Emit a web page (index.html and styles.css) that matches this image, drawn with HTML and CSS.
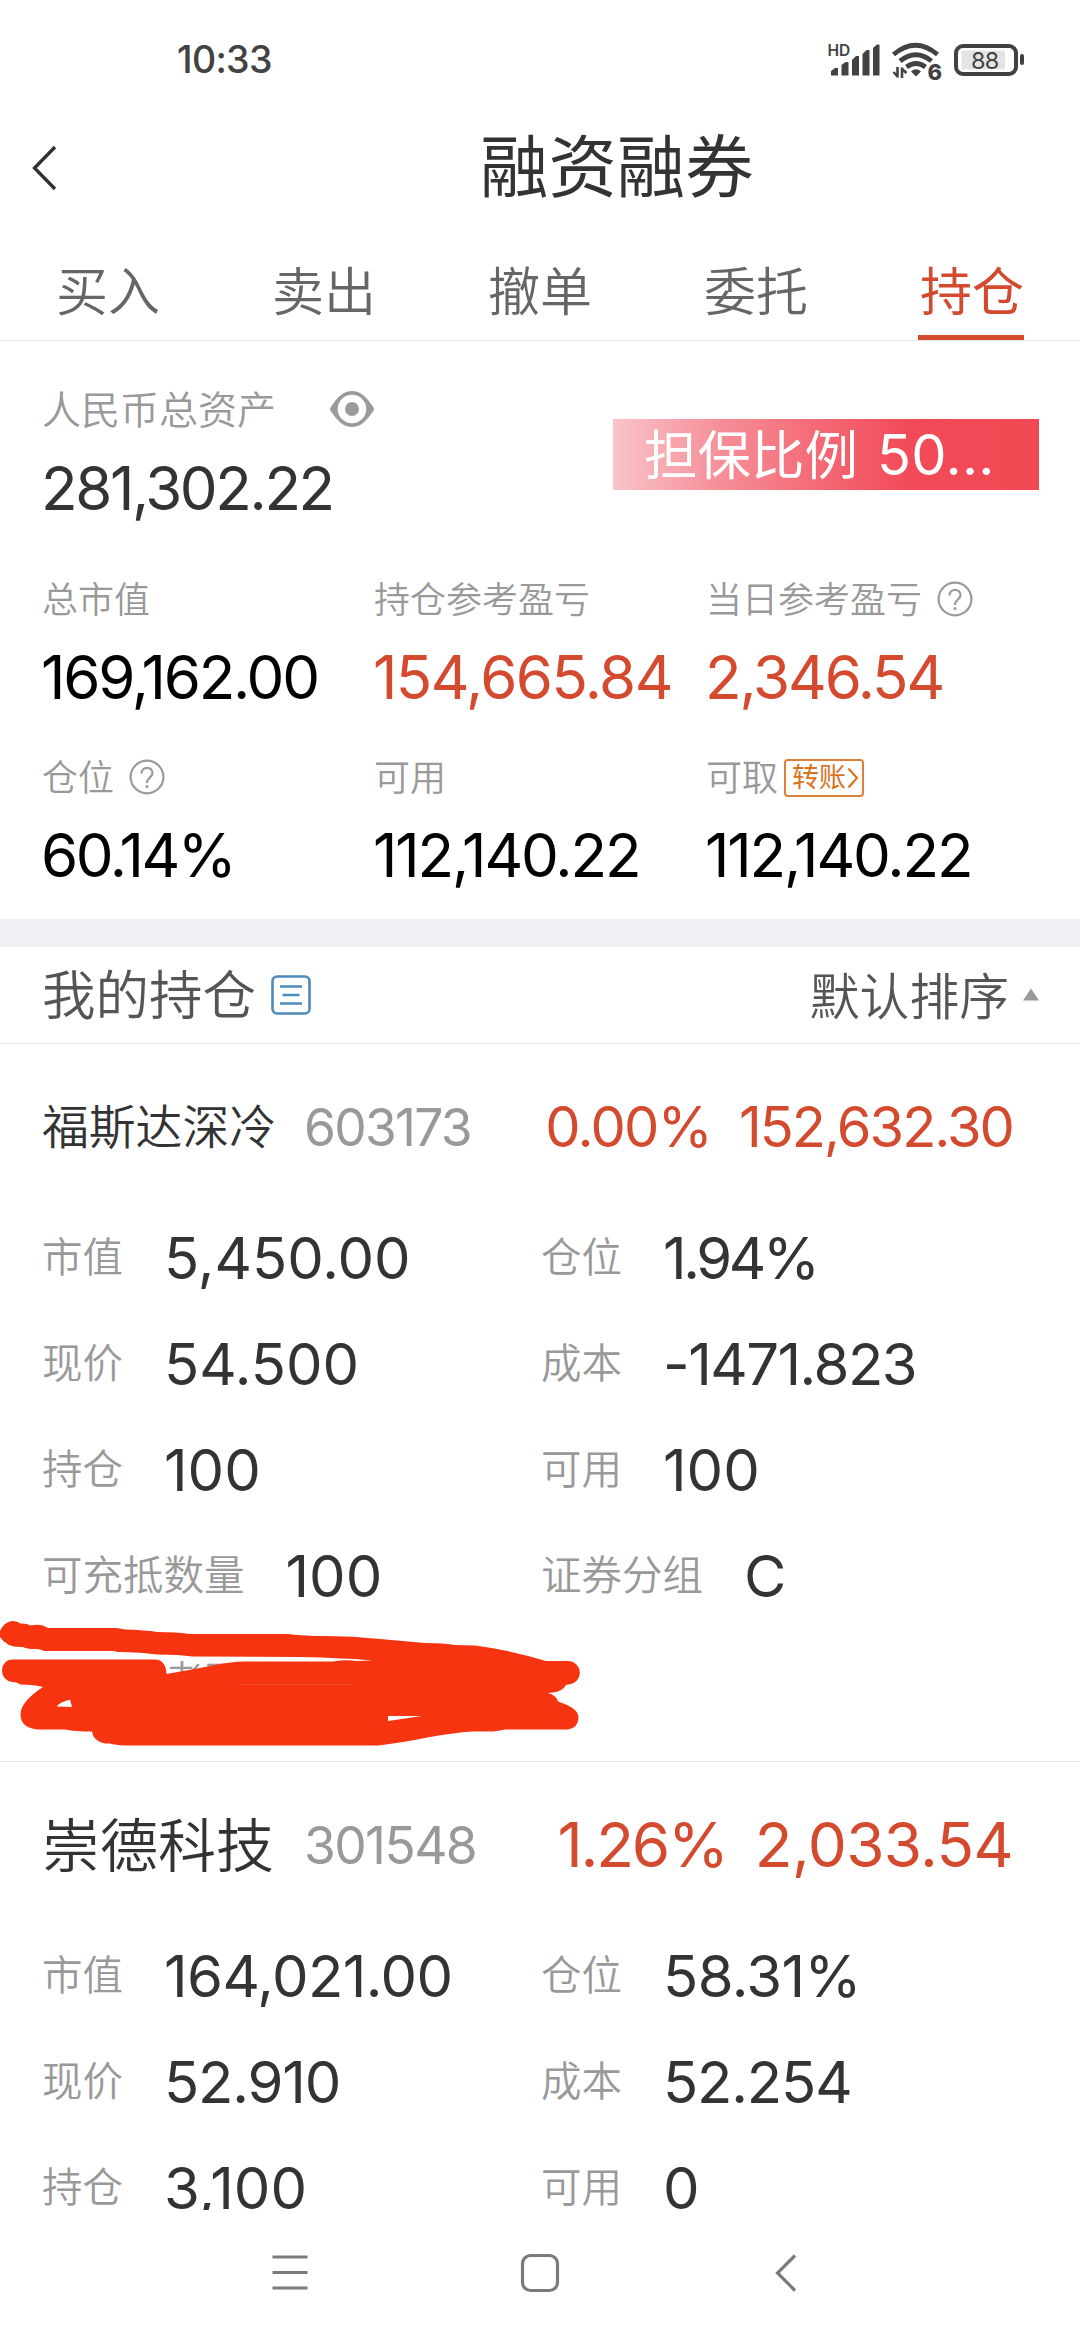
FILE: index.html
```html
<!DOCTYPE html>
<html lang="zh-CN">
<head>
<meta charset="utf-8">
<title>融资融券</title>
<link rel="stylesheet" href="styles.css">
</head>
<body>
<div class="screen">
  <header class="status">
    <span class="time num k1">10:33</span>
    <svg class="status-icons" width="200" height="48" viewBox="826 36 200 48">
      <text class="hd" x="827.5" y="55.5">HD</text>
      <g fill="#424242">
        <path d="M831 75.500V71l4-3h3v7.500zM841.500 75.500V65l4-3h3v13.500zM852 75.500V60l4-4h3v19.500zM862.500 75.500V54l4-4h3v25.500zM873 75.500V48l4-3.500h2.500v31z"/>
        <path d="M911 71.500q5-4.500 10 0l-5 5z"/>
        <path d="M1020 56q0-2 2-2t2 2v7q0 2-2 2t-2-2z"/>
      </g>
      <g fill="none" stroke="#424242" stroke-width="4.800">
        <path d="M893.500 54.500q22-18.500 44 0M900 61q16-12.500 31.500 0M906.500 67q9.500-7 19 0"/>
        <path stroke-width="2.600" d="M897.500 67v10.500M902 67.500V78M893.500 72l4 4.500M902 69l4.500 4"/>
        <rect x="956" y="46" width="60" height="28" rx="7" stroke-width="4"/>
      </g>
      <rect x="961.500" y="50.500" width="43.500" height="19" rx="1.500" fill="#e4e4e4"/>
      <text class="wifi-gen" x="927.5" y="79.500">6</text>
      <text class="level" x="971" y="68.500">88</text>
    </svg>
  </header>

  <div class="titlebar">
    <svg class="back" width="28" height="48" viewBox="0 0 28 48"><path d="M25 3 4.500 24 25 45" fill="none" stroke="#333" stroke-width="3.400"/></svg>
    <h1>融资融券</h1>
  </div>

  <nav class="tabs">
    <a>买入</a><a>卖出</a><a>撤单</a><a>委托</a><a class="active">持仓</a>
  </nav>

  <section class="summary">
    <div class="total">
      <div>
        <div class="total-label">人民币总资产
          <svg width="46" height="38" viewBox="0 0 46 38"><path d="M1 19Q1 17.500 4 14C10 5 16 1 23 1s13 4 19 13Q45 17.500 45 19T42 24C36 33 30 37 23 37S10 33 4 24Q1 20.500 1 19z" fill="#9a9a9a"/><circle cx="23" cy="19" r="14.300" fill="#fff"/><circle cx="23" cy="19" r="7" fill="#9a9a9a"/></svg>
        </div>
        <div class="amount num dark k4">281,302.22</div>
      </div>
      <div class="ratio"><span>担保比例</span><span class="num">50...</span></div>
    </div>
    <div class="metrics">
      <div><div class="label">总市值</div><div class="amount num k37">169,162.00</div></div>
      <div><div class="label">持仓参考盈亏</div><div class="amount num red k26">154,665.84</div></div>
      <div><div class="label">当日参考盈亏<svg class="help" width="36" height="36" viewBox="0 0 36 36"><circle cx="18" cy="18" r="16.400"/><path d="M12.500 14.500c0-7.500 11-7.500 11-.5 0 4.500-5.500 4.500-5.500 10"/><circle class="dot" cx="18" cy="27.500" r="1.500"/></svg></div><div class="amount num red k35">2,346.54</div></div>
      <div><div class="label">仓位<svg class="help" width="36" height="36" viewBox="0 0 36 36"><circle cx="18" cy="18" r="16.400"/><path d="M12.500 14.500c0-7.500 11-7.500 11-.5 0 4.500-5.500 4.500-5.500 10"/><circle class="dot" cx="18" cy="27.500" r="1.500"/></svg></div><div class="amount num k4">60.14%</div></div>
      <div><div class="label">可用</div><div class="amount num k35">112,140.22</div></div>
      <div><div class="label">可取<span class="transfer"><span>转账</span><svg width="12" height="22" viewBox="0 0 12 22"><path d="M1.500 1.500 10 11 1.500 20.500" fill="none" stroke="#d9731f" stroke-width="2.200"/></svg></span></div><div class="amount num k35">112,140.22</div></div>
    </div>
  </section>

  <div class="band"></div>

  <div class="list-head">
    <h2>我的持仓</h2>
    <svg width="40" height="40" viewBox="0 0 40 40" fill="none" stroke="#4c8bbb"><rect x="1.500" y="1.500" width="37" height="37" rx="4.500" stroke-width="2.600"/><path d="M9 11.500h22M11.500 20h17M9 28.500h22" stroke-width="2.600"/></svg>
    <span class="sort">默认排序</span>
    <svg class="tri" width="18" height="13" viewBox="0 0 18 13"><path d="M9 0.500 17 12.500H1z" fill="#999"/></svg>
  </div>

  <main class="holdings">
    <article class="holding">
      <div class="head">
        <span class="name small">福斯达深冷</span><span class="code num k34">603173</span>
        <span class="gain num"><span class="k3">0.00%</span><span class="k35">152,632.30</span></span>
      </div>
      <div class="rows">
        <div><span class="key">市值</span><span class="num">5,450.00</span></div>
        <div><span class="key">仓位</span><span class="num k6">1.94%</span></div>
        <div><span class="key">现价</span><span class="num">54.500</span></div>
        <div><span class="key">成本</span><span class="num k26">-1471.823</span></div>
        <div><span class="key">持仓</span><span class="num">100</span></div>
        <div><span class="key">可用</span><span class="num">100</span></div>
        <div><span class="key">可充抵数量</span><span class="num">100</span></div>
        <div><span class="key">证券分组</span><span class="num">C</span></div>
        <div><span class="key">当日参考盈亏</span></div>
      </div>
      <svg class="scribble" width="600" height="160" viewBox="0 0 600 160">
        <path fill="#f63410" fill-rule="evenodd" d="M0 31Q4 22 12 21Q18 21 20 23.500Q27 23 30 25.500Q41 23 48 28H117L125 29.500Q145 30 157 32Q178 32 190 34H288Q305 36 325 36Q353 36 380 39L425 43Q445 43 455 45L475 45.500Q510 50 546 61H568A11.500 11.500 0 0 1 568 84.500L566 85Q562 92 553 92.500L548 93Q556 95 558 101.500Q579 108 578.500 118Q578 128 568 129.500H505Q495 131.500 490 131.500H472Q455 132.500 430 137Q400 143 378 145.500H125Q115 145 110 143.500H105Q93 141 92 131.500Q75 131.500 65 129.500H38Q21 128 20.500 115Q20 102 43 87Q35 84.500 20 84.500Q18 82 12 82Q2 80 2 70Q3 60 12 59.500H155Q166 60 166.500 74Q190 70 210 66Q230 61.500 245 61.500H333Q345 59.500 357 61L373 60.500Q345 58 300 57L192 56.500Q180 54.500 157 54.500Q138 51.500 117 52L114 51H44Q40 48.500 35 49Q27 49 23 47Q7 48 0 37ZM56.500 106.500Q60 102 70 99.500L72 107ZM388 116H422L388 121Z"/>
        <path d="M241 84.500H352" stroke="#fa6a4e" stroke-width=".5"/>
      </svg>
    </article>

    <article class="holding">
      <div class="head">
        <span class="name">崇德科技</span><span class="code num k3">301548</span>
        <span class="gain large num"><span class="k35">1.26%</span><span class="k1">2,033.54</span></span>
      </div>
      <div class="rows">
        <div><span class="key">市值</span><span class="num k1">164,021.00</span></div>
        <div><span class="key">仓位</span><span class="num k1">58.31%</span></div>
        <div><span class="key">现价</span><span class="num k2">52.910</span></div>
        <div><span class="key">成本</span><span class="num k2">52.254</span></div>
        <div><span class="key">持仓</span><span class="num">3,100</span></div>
        <div><span class="key">可用</span><span class="num">0</span></div>
      </div>
    </article>
  </main>

  <footer class="sysnav">
    <svg width="40" height="40" viewBox="0 0 40 40"><path d="M2.500 4h35M2.500 19.500h35M2.500 35h35"/></svg>
    <svg width="40" height="40" viewBox="0 0 40 40"><rect x="2.500" y="2.500" width="35" height="35" rx="8"/></svg>
    <svg width="40" height="40" viewBox="0 0 40 40"><path d="M28 2.500 10.500 20 28 37.500"/></svg>
  </footer>
</div>
</body>
</html>
```
FILE: styles.css
```css
* { box-sizing: border-box; margin: 0; padding: 0; }
body { background: #fff; }
svg { display: block; flex: none; }
.screen {
  width: 1080px; height: 2340px; overflow: hidden;
  display: flex; flex-direction: column;
  background: #fff; color: #333;
  font-family: "Noto Sans CJK SC", sans-serif; font-weight: 350;
  white-space: nowrap;
}
.num { font-family: Inter, sans-serif; font-weight: 400; }

/* digit tracking */
.k1 { letter-spacing: -.01em; }
.k2 { letter-spacing: -.02em; }
.k26 { letter-spacing: -.026em; }
.k3 { letter-spacing: -.031em; }
.k34 { letter-spacing: -.034em; }
.k35 { letter-spacing: -.035em; }
.k37 { letter-spacing: -.037em; }
.k4 { letter-spacing: -.04em; }
.k6 { letter-spacing: -.058em; }

.status {
  height: 118px; flex: none; padding: 2px 54px 0 177px;
  display: flex; align-items: center; justify-content: space-between;
}
.time { font-size: 37.5px; line-height: 48px; font-weight: 500; color: #424242; letter-spacing: -.018em; }
.status-icons text { font-family: Inter, sans-serif; fill: #424242; }
.status-icons .hd { font-size: 15.5px; font-weight: 600; }
.status-icons .wifi-gen { font-size: 22px; font-weight: 800; }
.status-icons .level { font-size: 23.5px; font-weight: 400; letter-spacing: -.8px; }

.titlebar { height: 87px; flex: none; display: flex; align-items: center; padding-left: 30px; }
.back { margin-top: 13px; }
.titlebar h1 { margin: 2px 0 0 422px; font-size: 68.4px; line-height: 84px; font-weight: 400; }

.tabs { height: 136px; flex: none; display: flex; border-bottom: 1px solid #e6e6e6; }
.tabs a {
  flex: 1; position: relative; padding-top: 49px; text-align: center;
  font-size: 52px; line-height: 70px; color: #666;
}
.tabs .active { color: #d44a2f; font-weight: 400; }
.tabs .active::after {
  content: ""; position: absolute; left: 54px; right: 56px; bottom: 0; height: 5px;
  background: #d44a2f;
}

.summary { height: 578px; flex: none; padding: 46px 41px 0 42px; }
.total { height: 190px; display: flex; justify-content: space-between; }
.total-label {
  display: flex; align-items: center; gap: 53px; height: 40px;
  font-size: 39px; line-height: 60px; color: #999;
}
.total-label svg { margin-top: 4px; }
.amount { font-size: 60px; line-height: 60px; margin-top: 31px; color: #000; text-indent: -1px; }
.dark { color: #333; }
.red { color: #d44a2f; }
.ratio {
  width: 426px; height: 71px; margin-top: 32px; padding-left: 31px;
  display: flex; align-items: center; gap: 19px;
  font-size: 53.5px; line-height: 70px; font-weight: 400; color: #fff;
  background: linear-gradient(90deg, #fac3c9 0%, #f58f98 25%, #f46673 50%, #f24a58 70%, #f24854 100%);
}
.ratio span:first-child { margin-bottom: 6px; }
.ratio .num { font-size: 56px; letter-spacing: .005em; margin-top: 1px; }
.metrics { display: grid; grid-template-columns: repeat(3, 332px); grid-auto-rows: 178px; }
.metrics .amount { margin-top: 30px; }
.label { display: flex; align-items: center; height: 40px; font-size: 36px; line-height: 56px; color: #999; }
.help { margin: 3px 0 0 15px; fill: none; stroke: #9a9a9a; stroke-width: 2.2; }
.help .dot { fill: #9a9a9a; stroke: none; }
.transfer {
  width: 80px; height: 38px; margin: 5px 0 0 6px; padding-left: 6px;
  display: flex; align-items: center; gap: 1px;
  border: 2px solid #dd8136; border-radius: 4px; color: #d9731f;
  font-size: 27px; line-height: 40px; font-weight: 400;
}
.transfer span { margin-bottom: 3px; }

.band { height: 28px; flex: none; background: #efeff4; }

.list-head {
  height: 97px; flex: none; display: flex; align-items: center;
  padding: 0 40px 0 42px; border-bottom: 1px solid #e6e6e6; color: #555;
}
.list-head h2 { font-size: 53.5px; line-height: 80px; font-weight: 350; margin: 0 15px 7px 0; }
.sort { margin: 0 13px 5px auto; font-size: 49.8px; line-height: 76px; }
.tri { margin-bottom: 2px; }

.holdings { height: 1166px; flex: none; overflow: hidden; }
.holding { position: relative; height: 718px; border-bottom: 1px solid #e6e6e6; }
.head { height: 160px; padding: 5px 67px 0 42px; display: flex; align-items: center; line-height: 86px; }
.name { width: 262px; font-size: 58px; margin-bottom: 6px; }
.name.small { font-size: 46.8px; }
.code { font-size: 51.5px; color: #999; }
.gain { margin-left: auto; display: flex; gap: 28px; font-size: 56px; color: #d44a2f; }
.gain.large { font-size: 62px; }
.rows { display: grid; grid-template-columns: 499px 1fr; grid-auto-rows: 106px; padding-left: 42px; }
.rows > div { display: flex; align-items: center; gap: 41px; font-size: 58px; line-height: 70px; }
.rows > div > .num { margin-top: 1px; }
.key { font-size: 40.5px; line-height: 60px; margin-bottom: 5px; color: #999; }
/* hand-drawn marker over the last row */
.scribble { position: absolute; left: 0; top: 556px; }

.sysnav {
  height: 130px; flex: none; padding: 0 273px 5px 270px; background: #fff;
  display: flex; align-items: center; justify-content: space-between;
}
.sysnav svg { fill: none; stroke: #7a7a7a; stroke-width: 3.2; }
.sysnav svg:last-child { margin-left: -2px; }
```
